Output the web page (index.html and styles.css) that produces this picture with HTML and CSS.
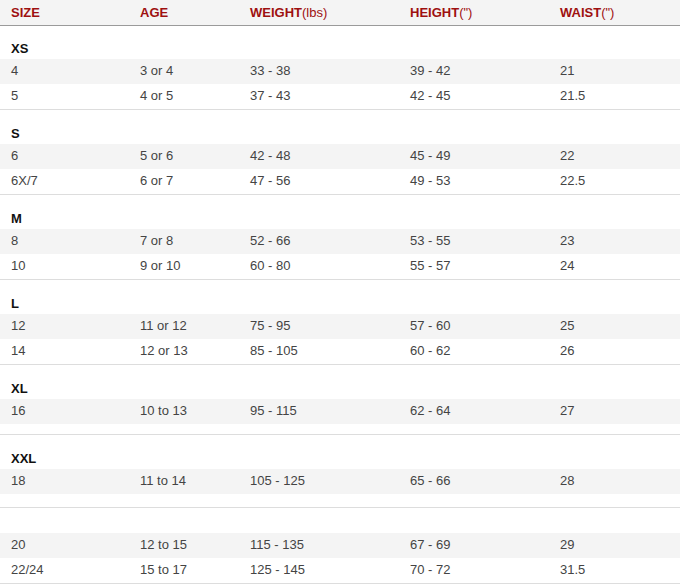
FILE: index.html
```html
<!DOCTYPE html>
<html>
<head>
<meta charset="utf-8">
<link rel="stylesheet" href="styles.css">
</head>
<body>
<table class="chart">
  <colgroup>
    <col class="c-size"><col class="c-age"><col class="c-weight"><col class="c-height"><col class="c-waist">
  </colgroup>
  <thead>
    <tr class="head">
      <th>SIZE</th><th>AGE</th><th>WEIGHT<span class="unit">(lbs)</span></th><th>HEIGHT<span class="unit">(")</span></th><th>WAIST<span class="unit">(")</span></th>
    </tr>
  </thead>
  <tbody>
    <tr class="label first"><td colspan="5">XS</td></tr>
    <tr class="row odd"><td>4</td><td>3 or 4</td><td>33 - 38</td><td>39 - 42</td><td>21</td></tr>
    <tr class="row last"><td>5</td><td>4 or 5</td><td>37 - 43</td><td>42 - 45</td><td>21.5</td></tr>
  </tbody>
  <tbody>
    <tr class="label"><td colspan="5">S</td></tr>
    <tr class="row odd"><td>6</td><td>5 or 6</td><td>42 - 48</td><td>45 - 49</td><td>22</td></tr>
    <tr class="row last"><td>6X/7</td><td>6 or 7</td><td>47 - 56</td><td>49 - 53</td><td>22.5</td></tr>
  </tbody>
  <tbody>
    <tr class="label"><td colspan="5">M</td></tr>
    <tr class="row odd"><td>8</td><td>7 or 8</td><td>52 - 66</td><td>53 - 55</td><td>23</td></tr>
    <tr class="row last"><td>10</td><td>9 or 10</td><td>60 - 80</td><td>55 - 57</td><td>24</td></tr>
  </tbody>
  <tbody>
    <tr class="label"><td colspan="5">L</td></tr>
    <tr class="row odd"><td>12</td><td>11 or 12</td><td>75 - 95</td><td>57 - 60</td><td>25</td></tr>
    <tr class="row last"><td>14</td><td>12 or 13</td><td>85 - 105</td><td>60 - 62</td><td>26</td></tr>
  </tbody>
  <tbody>
    <tr class="label"><td colspan="5">XL</td></tr>
    <tr class="row odd"><td>16</td><td>10 to 13</td><td>95 - 115</td><td>62 - 64</td><td>27</td></tr>
    <tr class="gap"><td colspan="5"></td></tr>
  </tbody>
  <tbody>
    <tr class="label"><td colspan="5">XXL</td></tr>
    <tr class="row odd"><td>18</td><td>11 to 14</td><td>105 - 125</td><td>65 - 66</td><td>28</td></tr>
    <tr class="gap gap-lg"><td colspan="5"></td></tr>
  </tbody>
  <tbody>
    <tr class="label empty"><td colspan="5"></td></tr>
    <tr class="row odd"><td>20</td><td>12 to 15</td><td>115 - 135</td><td>67 - 69</td><td>29</td></tr>
    <tr class="row last"><td>22/24</td><td>15 to 17</td><td>125 - 145</td><td>70 - 72</td><td>31.5</td></tr>
  </tbody>
</table>
</body>
</html>
```
FILE: styles.css
```css
html, body {
  margin: 0;
  padding: 0;
  background: #ffffff;
}

body {
  font-family: "Liberation Sans", Arial, Helvetica, sans-serif;
  font-size: 13px;
  color: #444444;
}

.chart {
  width: 680px;
  table-layout: fixed;
  border-collapse: separate;
  border-spacing: 0;
}

.c-size { width: 129px; }
.c-age { width: 110px; }
.c-weight { width: 160px; }
.c-height { width: 150px; }
.c-waist { width: 131px; }

.chart th,
.chart td {
  padding: 0 0 0 11px;
  text-align: left;
  white-space: nowrap;
}

.head {
  height: 26px;
}

.head th {
  background: #f4f4f4;
  color: #9e1010;
  font-weight: bold;
  vertical-align: middle;
  border-bottom: 1px solid #9a9a9a;
  padding-bottom: 1px;
}

.head .unit {
  font-weight: normal;
}

.label {
  height: 34px;
}

.label.first {
  height: 33px;
}

.label.empty {
  height: 25px;
}

.label td {
  vertical-align: bottom;
  padding-bottom: 3px;
  font-weight: bold;
  color: #111111;
}

.row {
  height: 25px;
}

.row td {
  vertical-align: middle;
  padding-bottom: 2px;
}

.row.odd td {
  background: #f4f4f4;
}

.row.last {
  height: 26px;
}

.row.last td,
.gap td {
  border-bottom: 1px solid #dddddd;
}

.gap {
  height: 11px;
}

.gap.gap-lg {
  height: 14px;
}
```
